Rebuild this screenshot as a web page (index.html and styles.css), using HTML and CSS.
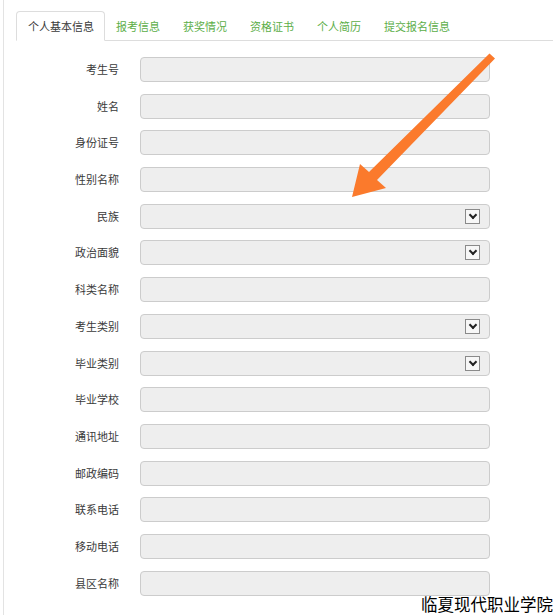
FILE: index.html
```html
<!DOCTYPE html>
<html lang="zh-CN">

<head>
    <meta charset="UTF-8">
    <meta name="viewport" content="width=device-width, initial-scale=1.0">
    <title>个人基本信息</title>
    <link rel="stylesheet" href="styles.css">
</head>

<body>
    <div class="page">
        <ul class="tabs">
            <li class="active">个人基本信息</li>
            <li>报考信息</li>
            <li>获奖情况</li>
            <li>资格证书</li>
            <li>个人简历</li>
            <li>提交报名信息</li>
        </ul>
        <form class="info">
            <label>考生号</label><div class="field"></div>
            <label>姓名</label><div class="field"></div>
            <label>身份证号</label><div class="field"></div>
            <label>性别名称</label><div class="field"></div>
            <label>民族</label><div class="field select"><span class="drop"></span></div>
            <label>政治面貌</label><div class="field select"><span class="drop"></span></div>
            <label>科类名称</label><div class="field"></div>
            <label>考生类别</label><div class="field select"><span class="drop"></span></div>
            <label>毕业类别</label><div class="field select"><span class="drop"></span></div>
            <label>毕业学校</label><div class="field"></div>
            <label>通讯地址</label><div class="field"></div>
            <label>邮政编码</label><div class="field"></div>
            <label>联系电话</label><div class="field"></div>
            <label>移动电话</label><div class="field"></div>
            <label>县区名称</label><div class="field"></div>
        </form>
    </div>
    <!-- 标注箭头 -->
    <svg class="arrow" width="553" height="615" viewBox="0 0 553 615">
        <polygon points="489.5,53.5 495,58.5 377,180 386,188 352,197 360,164 369,172" fill="#fb7a2c"/>
    </svg>
    <div class="mark">临夏现代职业学院</div>
</body>

</html>
```

FILE: styles.css
```css
* {
    margin: 0;
    padding: 0;
    box-sizing: border-box;
}

body {
    width: 553px;
    height: 615px;
    overflow: hidden;
    position: relative;
    font-family: "Noto Sans CJK SC", "Microsoft YaHei", sans-serif;
    font-size: 11px;
    color: #3a3a3a;
    background: #fff;
}

.page {
    margin-left: 3px;
    height: 615px;
    border-left: 1px solid #e3e3e3;
    padding-top: 11px;
}

.tabs {
    list-style: none;
    display: flex;
    margin-left: 12px;
    border-bottom: 1px solid #ddd;
}

.tabs li {
    height: 30px;
    line-height: 28px;
    padding: 0 10.5px;
    color: #5cae48;
    border: 1px solid transparent;
    border-radius: 4px 4px 0 0;
    margin-bottom: -1px;
}

.tabs li.active {
    color: #3a3a3a;
    background: #fff;
    border-color: #ddd #ddd #fff;
    padding: 0 9.5px 0 11px;
}

.info {
    display: grid;
    grid-template-columns: 115px 350px;
    grid-auto-rows: 25px;
    column-gap: 21px;
    row-gap: 11.7px;
    padding-top: 16px;
}

.info label {
    text-align: right;
    line-height: 25px;
}

.field {
    position: relative;
    background: #eee;
    border: 1px solid #ccc;
    border-radius: 4px;
}

.select .drop {
    position: absolute;
    right: 9px;
    top: 4px;
    width: 15px;
    height: 15px;
    border: 1px solid #8a8a8a;
    background: #f7f7f7;
}

.select .drop::after {
    content: "";
    position: absolute;
    left: 4px;
    top: 2px;
    width: 4px;
    height: 4px;
    border-right: 2px solid #222;
    border-bottom: 2px solid #222;
    transform: rotate(45deg);
}

.arrow {
    position: absolute;
    left: 0;
    top: 0;
    pointer-events: none;
}

.mark {
    position: absolute;
    right: 0;
    bottom: 1px;
    font-size: 16.5px;
    line-height: 20px;
    color: #000;
}
```
